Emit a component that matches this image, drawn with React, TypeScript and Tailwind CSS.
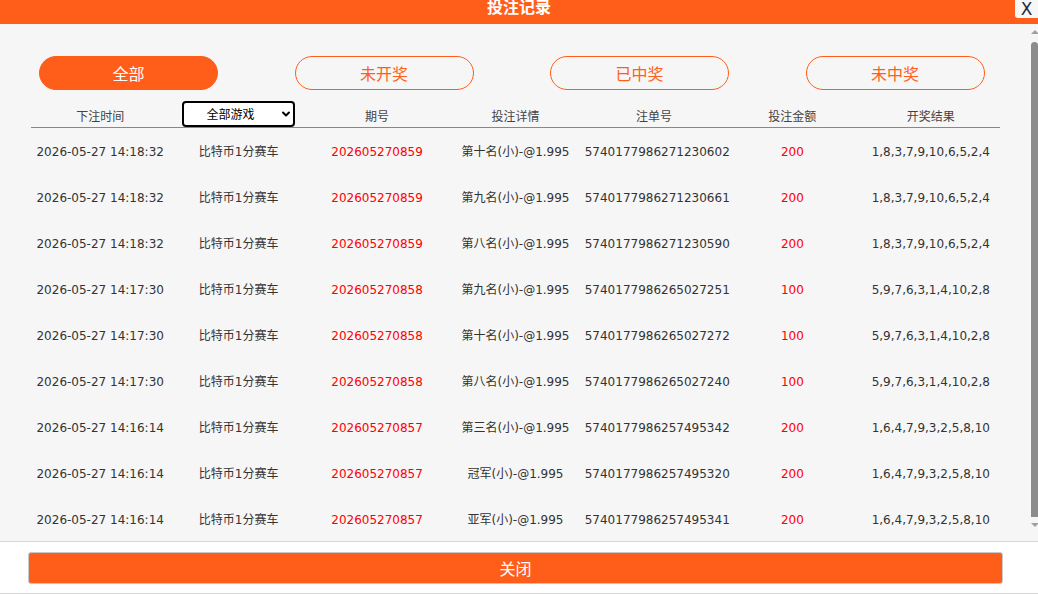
import { ChevronDown } from "lucide-react";

const tabs = ["全部", "未开奖", "已中奖", "未中奖"];

const columns = ["下注时间", "", "期号", "投注详情", "注单号", "投注金额", "开奖结果"];

const records = [
  ["2026-05-27 14:18:32", "比特币1分赛车", "202605270859", "第十名(小)-@1.995", "5740177986271230602", "200", "1,8,3,7,9,10,6,5,2,4"],
  ["2026-05-27 14:18:32", "比特币1分赛车", "202605270859", "第九名(小)-@1.995", "5740177986271230661", "200", "1,8,3,7,9,10,6,5,2,4"],
  ["2026-05-27 14:18:32", "比特币1分赛车", "202605270859", "第八名(小)-@1.995", "5740177986271230590", "200", "1,8,3,7,9,10,6,5,2,4"],
  ["2026-05-27 14:17:30", "比特币1分赛车", "202605270858", "第九名(小)-@1.995", "5740177986265027251", "100", "5,9,7,6,3,1,4,10,2,8"],
  ["2026-05-27 14:17:30", "比特币1分赛车", "202605270858", "第十名(小)-@1.995", "5740177986265027272", "100", "5,9,7,6,3,1,4,10,2,8"],
  ["2026-05-27 14:17:30", "比特币1分赛车", "202605270858", "第八名(小)-@1.995", "5740177986265027240", "100", "5,9,7,6,3,1,4,10,2,8"],
  ["2026-05-27 14:16:14", "比特币1分赛车", "202605270857", "第三名(小)-@1.995", "5740177986257495342", "200", "1,6,4,7,9,3,2,5,8,10"],
  ["2026-05-27 14:16:14", "比特币1分赛车", "202605270857", "冠军(小)-@1.995", "5740177986257495320", "200", "1,6,4,7,9,3,2,5,8,10"],
  ["2026-05-27 14:16:14", "比特币1分赛车", "202605270857", "亚军(小)-@1.995", "5740177986257495341", "200", "1,6,4,7,9,3,2,5,8,10"],
];

// thin scrollbar drawn beside the list
const ScrollTrack = () => (
  <div className="w-[7px] shrink-0 bg-[#f6f6f6] flex flex-col items-center pt-[6px] pb-[14px]">
    <div className="w-0 h-0 border-l-[4px] border-r-[4px] border-b-[4px] border-l-transparent border-r-transparent border-b-[#a0a0a0]" />
    <div className="mt-[8px] w-[7px] flex-1 bg-[#8c8c8c] rounded-t-[4px]" />
    <div className="mt-[6px] w-0 h-0 border-l-[4px] border-r-[4px] border-t-[4px] border-l-transparent border-r-transparent border-t-[#a0a0a0]" />
  </div>
);

const BetRecords = () => {
  return (
    <div className="w-[1038px] h-[594px] flex flex-col bg-white font-['DejaVu_Sans','Noto_Sans_CJK_SC',sans-serif]">
      {/* title bar */}
      <div className="relative h-6 shrink-0 bg-[#ff5e1a] flex justify-center">
        <div className="text-white font-bold text-[16px] leading-[13px] font-['Noto_Sans_CJK_SC',sans-serif]">
          投注记录
        </div>
        <button className="absolute right-0 top-0 w-[23px] h-[18px] bg-[#f7f7f7] rounded-bl-[3px] text-[#1f2a44] text-[17px] leading-[18px] font-['DejaVu_Sans',sans-serif]">
          X
        </button>
      </div>

      {/* list */}
      <div className="flex-1 min-h-0 flex bg-[#f6f6f6]">
        <div className="flex-1 min-w-0 overflow-y-auto [scrollbar-width:none]">
          <div className="px-[31px] pt-[32px]">
            <div className="flex gap-[76.5px] pl-2">
              {tabs.map((t, i) => (
                <div
                  key={t}
                  className={
                    i === 0
                      ? "w-[179px] h-[34px] rounded-full bg-[#ff5e1a] border border-[#ff5e1a] text-white text-[16px] flex items-center justify-center font-['Noto_Sans_CJK_SC',sans-serif]"
                      : "w-[179px] h-[34px] rounded-full border border-[#ff5e1a] text-[#ff5e1a] text-[16px] flex items-center justify-center font-['Noto_Sans_CJK_SC',sans-serif]"
                  }
                >
                  {t}
                </div>
              ))}
            </div>

            <div className="mt-[11px] grid grid-cols-7 h-[27px] items-center border-b border-[#8f8585] text-[12px] text-[#444] font-['Noto_Sans_CJK_SC',sans-serif]">
              {columns.map((c, i) =>
                i === 1 ? (
                  <div key={i} className="flex justify-center">
                    <div className="relative w-[113px] h-[26px] -mt-[1px]">
                      <select className="appearance-none w-full h-full bg-white border-2 border-black rounded-[4px] text-[12px] text-black pr-4 [text-align-last:center]">
                        <option>全部游戏</option>
                      </select>
                      <ChevronDown className="absolute right-[3px] top-[7px] w-3 h-3 text-black pointer-events-none" strokeWidth={4} />
                    </div>
                  </div>
                ) : (
                  <div key={i} className="text-center pt-[3px]">
                    {c}
                  </div>
                )
              )}
            </div>

            {records.map((r, i) => (
              <div key={i} className="grid grid-cols-7 h-[46px] items-center pt-[2px] text-[12px] text-[#333]">
                <div className="text-center">{r[0]}</div>
                <div className="text-center">{r[1]}</div>
                <div className="text-center text-[#ff0000]">{r[2]}</div>
                <div className="text-center">{r[3]}</div>
                <div className="text-center">{r[4]}</div>
                <div className="text-center text-[#ff0000]">{r[5]}</div>
                <div className="text-center">{r[6]}</div>
              </div>
            ))}
          </div>
        </div>
        <ScrollTrack />
      </div>

      {/* footer */}
      <div className="h-[53px] shrink-0 bg-white border-t border-b border-[#d6d6d6] pt-[10px] pl-[28px]">
        <button className="w-[975px] h-8 bg-[#ff5e1a] border border-[#c9c9c9] rounded-[3px] text-white text-[16px] font-['Noto_Sans_CJK_SC',sans-serif]">
          关闭
        </button>
      </div>
    </div>
  );
};

export default function App() {
  return <BetRecords />;
}
